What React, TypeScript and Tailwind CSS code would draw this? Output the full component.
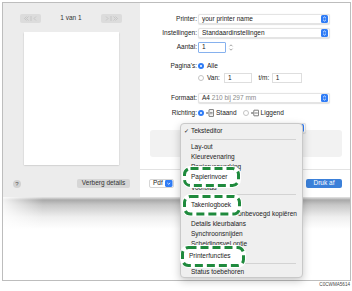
import React from 'react';

const Stepper = () => (
  <svg width="7" height="8" viewBox="0 0 7 8" className="shrink-0">
    <rect x="0" y="0" width="7" height="8" rx="1.6" fill="#2f7cf6" />
    <path d="M2 3.3 L3.5 1.9 L5 3.3" stroke="#fff" strokeWidth="0.8" fill="none" />
    <path d="M2 4.7 L3.5 6.1 L5 4.7" stroke="#fff" strokeWidth="0.8" fill="none" />
  </svg>
);

const Popup = ({ children, w = 'w-[132px]' }: { children?: React.ReactNode; w?: string }) => (
  <div className={`flex items-center h-full ${w} bg-white border border-[#e4e4e4] rounded-[2px] pl-[3px] pr-[1px] shadow-[0_0.5px_1px_rgba(0,0,0,0.12)]`}>
    <span className="flex-1 whitespace-nowrap">{children}</span>
    <Stepper />
  </div>
);

const Label = ({ children }: { children: React.ReactNode }) => (
  <div className="w-[58px] shrink-0 text-right pr-[1px] whitespace-nowrap">{children}</div>
);

const RadioOn = () => (
  <span className="w-[6px] h-[6px] shrink-0 rounded-full bg-[#2f7cf6] flex items-center justify-center">
    <span className="w-[2.4px] h-[2.4px] rounded-full bg-white" />
  </span>
);

const RadioOff = () => (
  <span className="w-[6px] h-[6px] shrink-0 rounded-full bg-white border-[0.7px] border-[#c4c4c4] block" />
);

const OrientIcon = ({ land }: { land?: boolean }) => (
  <svg width="8" height="8" viewBox="0 0 8 8" className="shrink-0 block">
    <circle cx="1" cy="4" r="0.7" fill="#555" />
    <path d="M0.3 4 H2.4" stroke="#555" strokeWidth="0.6" />
    {land ? (
      <>
        <rect x="2.8" y="1.2" width="4.8" height="5.6" rx="0.4" fill="none" stroke="#444" strokeWidth="0.7" />
        <path d="M3.6 4 H6.8" stroke="#444" strokeWidth="0.7" />
      </>
    ) : (
      <>
        <rect x="3" y="0.6" width="4.6" height="6.8" rx="0.4" fill="none" stroke="#444" strokeWidth="0.7" />
        <path d="M4 3.4 H6.6 M4 4.8 H6.6" stroke="#444" strokeWidth="0.6" />
      </>
    )}
  </svg>
);

const NavBtn = ({ right }: { right?: boolean }) => (
  <div className="w-[21px] h-[9px] bg-[#dcdcdc] rounded-[2px] flex items-center justify-center">
    <svg width="21" height="9" viewBox="0 0 21 9">
      {right ? (
        <g stroke="#bdbdbd" strokeWidth="0.7" fill="none">
          <path d="M5 2.5 L7 4.5 L5 6.5" />
          <path d="M10 2 V7" />
          <path d="M12.5 2.5 L14.5 4.5 L12.5 6.5 M14.5 2.5 L16.5 4.5 L14.5 6.5" />
        </g>
      ) : (
        <g stroke="#bdbdbd" strokeWidth="0.7" fill="none">
          <path d="M6.5 2.5 L4.5 4.5 L6.5 6.5 M8.5 2.5 L6.5 4.5 L8.5 6.5" />
          <path d="M11 2 V7" />
          <path d="M16 2.5 L14 4.5 L16 6.5" />
        </g>
      )}
    </svg>
  </div>
);

const MenuRow = ({ h, children, check }: { h: string; children?: React.ReactNode; check?: boolean }) => (
  <div className={`${h} relative flex items-center pl-[10px] whitespace-nowrap`}>
    {check && <span className="absolute left-[3px] font-['DejaVu_Sans',sans-serif] text-[6px]">✓</span>}
    {children}
  </div>
);

const MenuSep = ({ h, top }: { h: string; top: string }) => (
  <div className={`${h} pl-[9px] pr-[6px] ${top}`}>
    <div className="h-px w-full bg-[#d3d3d3]" />
  </div>
);

const Callout = ({ cls, w, h, text }: { cls: string; w: number; h: number; text: string }) => (
  <div className={`absolute z-30 ${cls}`} style={{ width: w, height: h }}>
    <svg width={w} height={h} viewBox={`0 0 ${w} ${h}`} className="absolute left-0 top-0 overflow-visible">
      <rect x="1.5" y="1.5" width={w - 3} height={h - 3} rx="6" fill="#ffffff" stroke="#ffffff" strokeWidth="5" />
      <rect x="1.5" y="1.5" width={w - 3} height={h - 3} rx="6" fill="#ffffff" stroke="#1f8a3d" strokeWidth="3" strokeDasharray="8 4" />
    </svg>
    <div className="absolute inset-0 flex items-center pl-[8px] whitespace-nowrap">{text}</div>
  </div>
);

export default function App() {
  return (
    <div className="w-[352px] h-[291px] bg-white relative overflow-hidden font-['Liberation_Sans',Arial,sans-serif] text-[6.5px] leading-none text-[#222]">
      <div className="pt-[2px] pl-[2px]">
        <div className="w-[349px] h-[279px] border border-[#bdbdbd] flex flex-col overflow-hidden">
          {/* dialog */}
          <div className="h-[194px] flex shrink-0">
            {/* left preview panel */}
            <div className="w-[137px] bg-[#ececec] flex flex-col">
              <div className="mt-[11px] h-[9px] flex items-center pl-[17px]">
                <NavBtn />
                <div className="w-[60px] text-center text-[#333]">1 van 1</div>
                <NavBtn right />
              </div>
              <div className="mt-[9px] ml-[21px] w-[95px] h-[133px] bg-white shadow-[0_0.5px_1.5px_rgba(0,0,0,0.25)]" />
              <div className="mt-[14px] h-[9px] flex items-center">
                <div className="ml-[10px] w-[8px] h-[8px] rounded-full bg-[#d2d2d2] flex items-center justify-center text-[6px] text-[#555]">?</div>
                <div className="ml-[56px] w-[53px] h-[9px] rounded-[2px] bg-[#d6d6d6] flex items-center justify-center text-[#333]">Verberg details</div>
              </div>
            </div>
            {/* right settings panel */}
            <div className="flex-1 bg-white flex flex-col">
              <div className="mt-[11px] h-[10px] flex items-center">
                <Label>Printer:</Label>
                <Popup>your printer name</Popup>
              </div>
              <div className="mt-[4px] h-[10px] flex items-center">
                <Label>Instellingen:</Label>
                <Popup>Standaardinstellingen</Popup>
              </div>
              <div className="mt-[4px] h-[11px] flex items-center">
                <Label>Aantal:</Label>
                <div className="h-full w-[28px] bg-white border-[1.5px] border-[#86b1ee] rounded-[1px] flex items-center pl-[3px]">1</div>
                <svg width="6" height="9" viewBox="0 0 6 9" className="ml-[2px]">
                  <path d="M1.5 3.3 L3 1.8 L4.5 3.3" stroke="#666" strokeWidth="0.6" fill="none" />
                  <path d="M1.5 5.7 L3 7.2 L4.5 5.7" stroke="#666" strokeWidth="0.6" fill="none" />
                </svg>
              </div>
              <div className="mt-[9px] h-[8px] flex items-center">
                <Label>Pagina's:</Label>
                <RadioOn />
                <span className="ml-[3px]">Alle</span>
              </div>
              <div className="mt-[3px] h-[10px] flex items-center">
                <div className="w-[58px] shrink-0" />
                <RadioOff />
                <span className="ml-[3px]">Van:</span>
                <div className="ml-[4.5px] h-full w-[28px] bg-white border border-[#dedede] flex items-center pl-[2.5px]">1</div>
                <span className="ml-[6px]">t/m:</span>
                <div className="ml-[3px] h-full w-[30px] bg-white border border-[#dedede] flex items-center pl-[2.5px]">1</div>
              </div>
              <div className="mt-[10px] h-[10px] flex items-center">
                <Label>Formaat:</Label>
                <Popup>
                  A4 <span className="text-[#8a8a8a]">210 bij 297 mm</span>
                </Popup>
              </div>
              <div className="mt-[5px] h-[10px] flex items-center">
                <Label>Richting:</Label>
                <RadioOn />
                <span className="ml-[2px]"><OrientIcon /></span>
                <span className="ml-[2px]">Staand</span>
                <span className="ml-[6px]"><RadioOff /></span>
                <span className="ml-[2px]"><OrientIcon land /></span>
                <span className="ml-[2px]">Liggend</span>
              </div>
              <div className="mt-[5px] h-[10px] flex items-center relative z-10">
                <div className="w-[58px] shrink-0" />
                <Popup w="w-[108px]" />
              </div>
              <div className="mt-[-3px] ml-[10px] w-[192px] h-[27px] bg-[#f2f2f2] rounded-[3px]" />
              <div className="mt-[12px] h-px bg-[#e3e3e3]" />
              <div className="mt-[9px] h-[9px] flex items-center">
                <div className="ml-[9px] w-[25px] h-[9px] bg-white border border-[#d6d6d6] rounded-[2px] flex items-center pl-[3px] pr-[0.5px]">
                  <span className="flex-1">Pdf</span>
                  <svg width="7.5" height="7" viewBox="0 0 7.5 7">
                    <rect width="7.5" height="7" rx="1.4" fill="#2f7cf6" />
                    <path d="M2.3 2.9 L3.75 4.3 L5.2 2.9" stroke="#fff" strokeWidth="0.8" fill="none" />
                  </svg>
                </div>
                <div className="ml-auto mr-[8px] w-[36px] h-[9px] rounded-[2px] bg-[#3b80d9] text-white flex items-center justify-center">Druk af</div>
              </div>
            </div>
          </div>
          {/* shadow below dialog */}
          <div className="h-[32px] shrink-0 bg-[linear-gradient(to_right,rgba(255,255,255,0.85)_0px,rgba(255,255,255,0)_40px),linear-gradient(to_bottom,#e6e6e6_0px,#a9a9a9_3px,#c8c8c8_8px,#efefef_20px,#ffffff_32px)]" />
        </div>
      </div>
      <div className="mt-[1px] h-[6px] pr-[2px] text-right text-[4.6px] leading-[6px] text-[#444]">C0CWMA5614</div>

      {/* pop-up menu */}
      <div className="absolute z-20 left-[180px] top-[123px] w-[123px] h-[155px] bg-[#efefef] border border-[#c9c9c9] rounded-[4px] shadow-[0_3px_8px_rgba(0,0,0,0.22)] pt-[2px] text-[#222]">
        <MenuRow h="h-[10px]" check>Teksteditor</MenuRow>
        <MenuSep h="h-[6px]" top="pt-[2.5px]" />
        <MenuRow h="h-[10.3px]">Lay-out</MenuRow>
        <MenuRow h="h-[10.3px]">Kleurevenaring</MenuRow>
        <MenuRow h="h-[10.3px]">Papierverwerking</MenuRow>
        <MenuRow h="h-[10.3px]" />
        <MenuRow h="h-[10.3px]">Voorblad</MenuRow>
        <MenuSep h="h-[6px]" top="pt-[1px]" />
        <MenuRow h="h-[9.8px]" />
        <MenuRow h="h-[9.8px]">Voorkomen van onbevoegd kopiëren</MenuRow>
        <MenuRow h="h-[9.8px]">Details kleurbalans</MenuRow>
        <MenuRow h="h-[9.8px]">Synchroonsnijden</MenuRow>
        <MenuRow h="h-[10.3px]">Scheidingsvel optie</MenuRow>
        <MenuRow h="h-[9.8px]" />
        <MenuSep h="h-[8.5px]" top="pt-[4px]" />
        <MenuRow h="h-[10px]">Status toebehoren</MenuRow>
      </div>

      {/* callouts */}
      <Callout cls="left-[183px] top-[167px]" w={57} h={20} text="Papierinvoer" />
      <Callout cls="left-[183px] top-[194.5px]" w={58} h={20.5} text="Takenlogboek" />
      <Callout cls="left-[181px] top-[245.5px]" w={64} h={21} text="Printerfuncties" />
    </div>
  );
}
